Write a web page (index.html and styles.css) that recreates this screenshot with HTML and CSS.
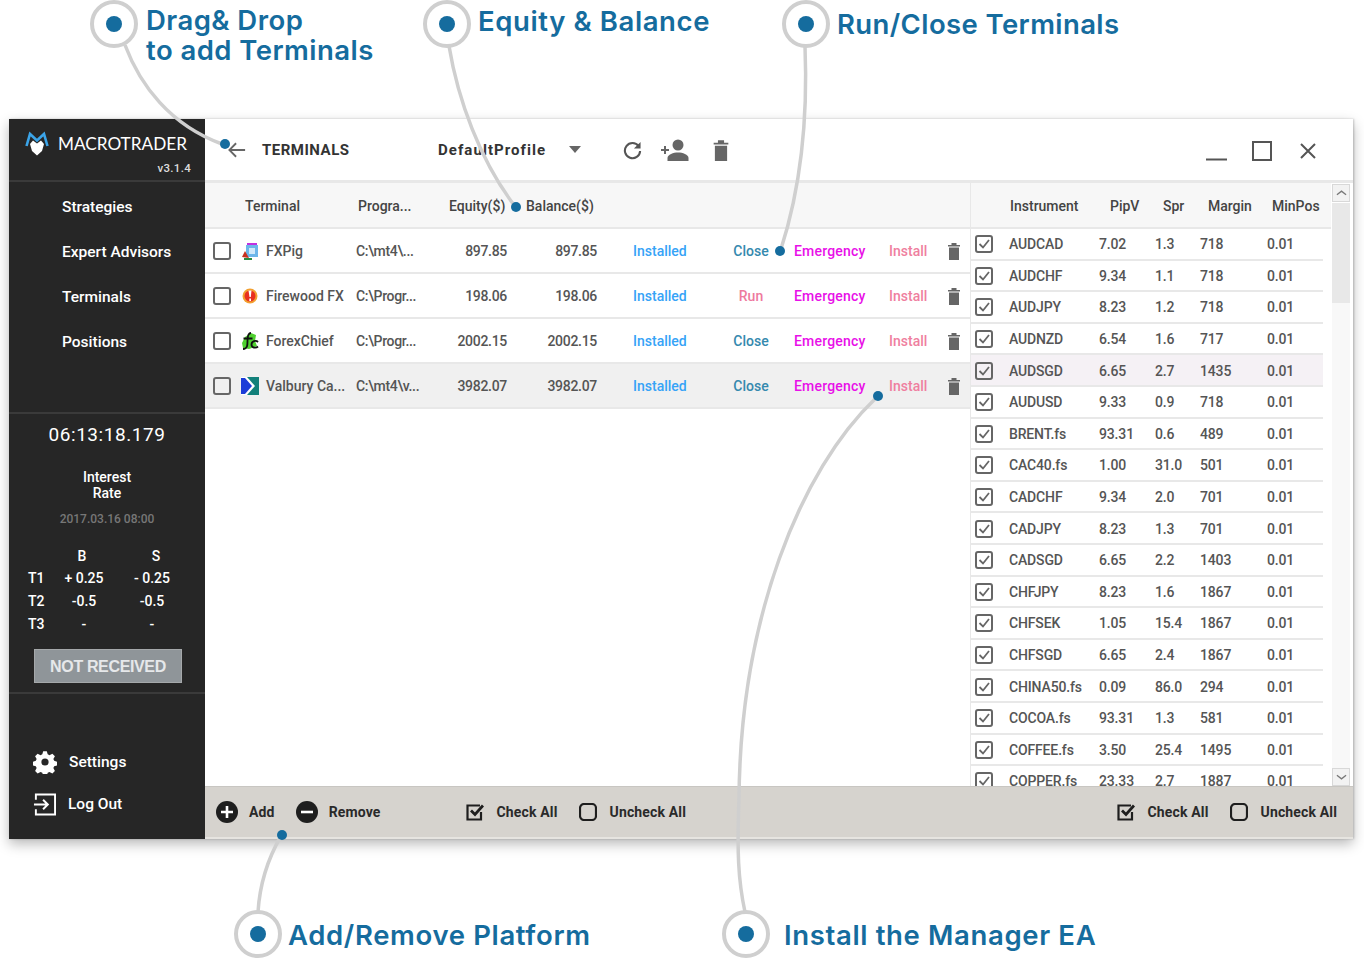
FILE: index.html
```html
<!DOCTYPE html>
<html lang="en">
<head>
<meta charset="utf-8">
<title>Macrotrader Terminals</title>
<link rel="stylesheet" href="styles.css">
</head>
<body>
<svg class="defs" aria-hidden="true">
  <symbol id="box" viewBox="0 0 18 18"><rect x="1" y="1" width="16" height="16" rx="2" fill="none" stroke="#666" stroke-width="2"/></symbol>
  <symbol id="boxc" viewBox="0 0 18 18"><rect x="1" y="1" width="16" height="16" rx="2" fill="none" stroke="#666" stroke-width="2"/><path d="M4.500 9l3.500 3.500L14 5" fill="none" stroke="#666" stroke-width="1.800"/></symbol>
  <symbol id="fbox" viewBox="0 0 18 18"><rect x="1" y="1" width="16" height="16" rx="4" fill="none" stroke="#1e1e1e" stroke-width="2.200"/></symbol>
  <symbol id="fboxc" viewBox="0 0 18 18"><path d="M15 9v7.500H1.500v-14H14" fill="none" stroke="#1e1e1e" stroke-width="2.200"/><path d="M5 7.500l4 4 8-9" fill="none" stroke="#1e1e1e" stroke-width="2.800"/></symbol>
  <symbol id="trash" viewBox="0 0 12 18"><path d="M0 3h12v1.500H0zM3.500 1h5v2h-5zM1 5.500h10V18H1z" fill="#666"/></symbol>
</svg>
<div class="stage">
  <div class="window">
    <aside class="sidebar">
      <div class="brand">
        <div class="brand-line">
          <svg class="logo" viewBox="0 0 24 25"><path d="M1.500 15L5 3l7 6.500L19 3l3.500 12" fill="none" stroke="#3ba4e8" stroke-width="2.600"/><path d="M5 13l3-3.500 4 3 4-3 3 3.500-2 7-5 4.500L7 20z" fill="#fff"/></svg>
          <span class="brand-name">MACROTRADER</span>
        </div>
        <div class="version">v3.1.4</div>
      </div>
      <nav class="nav">
        <a class="nav-item">Strategies</a>
        <a class="nav-item">Expert Advisors</a>
        <a class="nav-item">Terminals</a>
        <a class="nav-item">Positions</a>
      </nav>
      <section class="info">
        <div class="clock">06:13:18.179</div>
        <div class="rate-title">Interest<br>Rate</div>
        <div class="rate-date">2017.03.16 08:00</div>
        <div class="rates">
          <span></span><span class="c hb">B</span><span class="c hs">S</span>
          <span>T1</span><span class="c">+ 0.25</span><span class="c">- 0.25</span>
          <span>T2</span><span class="c">-0.5</span><span class="c">-0.5</span>
          <span>T3</span><span class="c">-</span><span class="c">-</span>
        </div>
        <div class="status">NOT RECEIVED</div>
      </section>
      <div class="side-foot">
        <a class="side-link">
          <svg class="gear" viewBox="0 0 24 24"><path fill="#fff" fill-rule="evenodd" d="M10 0h4l1 3.500 2 .9 3.200-1.700 2.800 2.800-1.700 3.200.9 2 3.500 1v4l-3.500 1-.9 2 1.700 3.200-2.800 2.800-3.200-1.700-2 .9-1 3.500h-4l-1-3.500-2-.9-3.200 1.700-2.800-2.800 1.700-3.200-.9-2-3.500-1v-4l3.500-1 .9-2-1.700-3.200 2.800-2.800 3.200 1.700 2-.9zM12 8a4 4 0 100 8 4 4 0 000-8z" transform="translate(1.200 1.200) scale(.9)"/></svg>
          <span>Settings</span>
        </a>
        <a class="side-link logout">
          <svg class="exit" viewBox="0 0 24 24"><path d="M3 7V1.500h20v21H3V17M1 12h14M10.500 7l5 5-5 5" fill="none" stroke="#fff" stroke-width="2"/></svg>
          <span>Log Out</span>
        </a>
      </div>
    </aside>
    <main class="main">
      <header class="toolbar">
        <svg class="back" viewBox="0 0 20 18"><path d="M19 9H2M9 1.500L1.500 9 9 16.500" fill="none" stroke="#666" stroke-width="2"/></svg>
        <h1 class="title">TERMINALS</h1>
        <span class="profile">DefaultProfile</span>
        <span class="caret"></span>
        <svg class="refresh" viewBox="0 0 20 20"><path d="M16.500 6A8 8 0 1018 11" fill="none" stroke="#555" stroke-width="2.200"/><path d="M18.500 1.500v7h-7z" fill="#555"/></svg>
        <svg class="adduser" viewBox="0 0 28 22"><path d="M0 10h8v2H0zM3 7h2v8H3z" fill="#666"/><circle cx="17" cy="6" r="5.500" fill="#666"/><path d="M6.500 22v-3c0-3.500 6-5.500 10.500-5.500S27.500 15.500 27.500 19v3z" fill="#666"/></svg>
        <svg class="bigtrash"><use href="#trash"/></svg>
        <div class="winctl">
          <svg class="win-min" viewBox="0 0 21 3"><path d="M0 1.500h21" stroke="#555" stroke-width="2"/></svg>
          <svg class="win-max" viewBox="0 0 20 20"><rect x="1" y="1" width="18" height="18" fill="none" stroke="#555" stroke-width="2"/></svg>
          <svg class="win-close" viewBox="0 0 16 16"><path d="M1 1l14 14M15 1L1 15" stroke="#555" stroke-width="2"/></svg>
        </div>
      </header>
      <div class="content">
        <section class="terminals">
          <div class="t-head">
            <span class="h-term">Terminal</span><span class="h-prog">Progra...</span><span class="h-eq">Equity($)</span><span class="h-bal">Balance($)</span>
          </div>
          <div class="t-row">
            <svg class="chk"><use href="#box"/></svg>
            <svg class="ticon" viewBox="0 0 18 18"><rect x="5" y="3" width="12" height="12" fill="#6cb6ea"/><rect x="8" y="6" width="6" height="6" fill="#cfe8fa"/><path d="M6 2h10" stroke="#c030e0" stroke-width="2"/><path d="M1 15l3-6 4 7z" fill="#c83020"/><path d="M3 17h8" stroke="#2a8a40" stroke-width="2"/></svg>
            <span class="name">FXPig</span><span class="path">C:\mt4\...</span><span class="num">897.85</span><span class="num">897.85</span>
            <span class="installed">Installed</span><span class="close">Close</span><span class="emergency">Emergency</span><span class="install">Install</span>
            <svg class="rowtrash"><use href="#trash"/></svg>
          </div>
          <div class="t-row">
            <svg class="chk"><use href="#box"/></svg>
            <svg class="ticon" viewBox="0 0 18 18"><circle cx="9" cy="9" r="7.500" fill="#f2a030"/><circle cx="9" cy="9" r="5.500" fill="#e83020"/><path d="M7.500 3.500h3l-.7 6.500H8.500zM8.300 11.500h1.700V14H8.300z" fill="#fff"/></svg>
            <span class="name">Firewood FX</span><span class="path">C:\Progr...</span><span class="num">198.06</span><span class="num">198.06</span>
            <span class="installed">Installed</span><span class="run">Run</span><span class="emergency">Emergency</span><span class="install">Install</span>
            <svg class="rowtrash"><use href="#trash"/></svg>
          </div>
          <div class="t-row">
            <svg class="chk"><use href="#box"/></svg>
            <svg class="ticon" viewBox="0 0 18 18"><path d="M1 11l3-6 6-4 5 2-1 6 2 5-8 3-6-1z" fill="#4fd030"/><path d="M10 1C7 1 6.500 5 6.500 9s0 8-4.500 8M2.500 6.500h9" fill="none" stroke="#111" stroke-width="1.800"/><path d="M17 10c-2-2-6.500-1-6.500 2.500s4.500 4 6.500 2" fill="none" stroke="#111" stroke-width="1.800"/></svg>
            <span class="name">ForexChief</span><span class="path">C:\Progr...</span><span class="num">2002.15</span><span class="num">2002.15</span>
            <span class="installed">Installed</span><span class="close">Close</span><span class="emergency">Emergency</span><span class="install">Install</span>
            <svg class="rowtrash"><use href="#trash"/></svg>
          </div>
          <div class="t-row t-row-sel">
            <svg class="chk"><use href="#box"/></svg>
            <svg class="ticon" viewBox="0 0 18 18"><rect width="18" height="18" fill="#12807a"/><path d="M0 0h6l8 9-8 9H0z" fill="#fff"/><path d="M0 1h4l7 8-7 8H0z" fill="#1c3cd8"/></svg>
            <span class="name">Valbury Ca...</span><span class="path">C:\mt4\v...</span><span class="num">3982.07</span><span class="num">3982.07</span>
            <span class="installed">Installed</span><span class="close">Close</span><span class="emergency">Emergency</span><span class="install">Install</span>
            <svg class="rowtrash"><use href="#trash"/></svg>
          </div>
        </section>
        <section class="instruments">
          <div class="i-table">
            <div class="i-head"><span></span><span>Instrument</span><span>PipV</span><span>Spr</span><span>Margin</span><span>MinPos</span></div>
            <div class="i-row"><svg class="chk"><use href="#boxc"/></svg><span>AUDCAD</span><span>7.02</span><span>1.3</span><span>718</span><span>0.01</span></div>
            <div class="i-row"><svg class="chk"><use href="#boxc"/></svg><span>AUDCHF</span><span>9.34</span><span>1.1</span><span>718</span><span>0.01</span></div>
            <div class="i-row"><svg class="chk"><use href="#boxc"/></svg><span>AUDJPY</span><span>8.23</span><span>1.2</span><span>718</span><span>0.01</span></div>
            <div class="i-row"><svg class="chk"><use href="#boxc"/></svg><span>AUDNZD</span><span>6.54</span><span>1.6</span><span>717</span><span>0.01</span></div>
            <div class="i-row i-row-sel"><svg class="chk"><use href="#boxc"/></svg><span>AUDSGD</span><span>6.65</span><span>2.7</span><span>1435</span><span>0.01</span></div>
            <div class="i-row"><svg class="chk"><use href="#boxc"/></svg><span>AUDUSD</span><span>9.33</span><span>0.9</span><span>718</span><span>0.01</span></div>
            <div class="i-row"><svg class="chk"><use href="#boxc"/></svg><span>BRENT.fs</span><span>93.31</span><span>0.6</span><span>489</span><span>0.01</span></div>
            <div class="i-row"><svg class="chk"><use href="#boxc"/></svg><span>CAC40.fs</span><span>1.00</span><span>31.0</span><span>501</span><span>0.01</span></div>
            <div class="i-row"><svg class="chk"><use href="#boxc"/></svg><span>CADCHF</span><span>9.34</span><span>2.0</span><span>701</span><span>0.01</span></div>
            <div class="i-row"><svg class="chk"><use href="#boxc"/></svg><span>CADJPY</span><span>8.23</span><span>1.3</span><span>701</span><span>0.01</span></div>
            <div class="i-row"><svg class="chk"><use href="#boxc"/></svg><span>CADSGD</span><span>6.65</span><span>2.2</span><span>1403</span><span>0.01</span></div>
            <div class="i-row"><svg class="chk"><use href="#boxc"/></svg><span>CHFJPY</span><span>8.23</span><span>1.6</span><span>1867</span><span>0.01</span></div>
            <div class="i-row"><svg class="chk"><use href="#boxc"/></svg><span>CHFSEK</span><span>1.05</span><span>15.4</span><span>1867</span><span>0.01</span></div>
            <div class="i-row"><svg class="chk"><use href="#boxc"/></svg><span>CHFSGD</span><span>6.65</span><span>2.4</span><span>1867</span><span>0.01</span></div>
            <div class="i-row"><svg class="chk"><use href="#boxc"/></svg><span>CHINA50.fs</span><span>0.09</span><span>86.0</span><span>294</span><span>0.01</span></div>
            <div class="i-row"><svg class="chk"><use href="#boxc"/></svg><span>COCOA.fs</span><span>93.31</span><span>1.3</span><span>581</span><span>0.01</span></div>
            <div class="i-row"><svg class="chk"><use href="#boxc"/></svg><span>COFFEE.fs</span><span>3.50</span><span>25.4</span><span>1495</span><span>0.01</span></div>
            <div class="i-row"><svg class="chk"><use href="#boxc"/></svg><span>COPPER.fs</span><span>23.33</span><span>2.7</span><span>1887</span><span>0.01</span></div>
          </div>
          <div class="scrollbar">
            <div class="sb-btn"><svg viewBox="0 0 12 8"><path d="M1 6l5-4 5 4" fill="none" stroke="#777" stroke-width="1.400"/></svg></div>
            <div class="sb-thumb"></div>
            <div class="sb-track"></div>
            <div class="sb-btn"><svg viewBox="0 0 12 8"><path d="M1 2l5 4 5-4" fill="none" stroke="#777" stroke-width="1.400"/></svg></div>
          </div>
        </section>
      </div>
      <footer class="footer">
        <svg class="f-round" viewBox="0 0 22 22"><circle cx="11" cy="11" r="11" fill="#1e1e1e"/><path d="M5 11h12M11 5v12" stroke="#fff" stroke-width="2.600"/></svg>
        <span class="f-label f-add">Add</span>
        <svg class="f-round" viewBox="0 0 22 22"><circle cx="11" cy="11" r="11" fill="#1e1e1e"/><path d="M5 11h12" stroke="#fff" stroke-width="2.600"/></svg>
        <span class="f-label f-remove">Remove</span>
        <svg class="f-box"><use href="#fboxc"/></svg>
        <span class="f-label f-check">Check All</span>
        <svg class="f-box"><use href="#fbox"/></svg>
        <span class="f-label">Uncheck All</span>
        <span class="f-space"></span>
        <svg class="f-box"><use href="#fboxc"/></svg>
        <span class="f-label f-check">Check All</span>
        <svg class="f-box"><use href="#fbox"/></svg>
        <span class="f-label">Uncheck All</span>
      </footer>
    </main>
  </div>

  <svg class="callouts" viewBox="0 0 1364 958">
    <g fill="none" stroke="#cfcfcf" stroke-width="3.500">
      <path d="M125 45C140 85 170 125 222 144"/>
      <path d="M449 46C458 100 480 160 514 205"/>
      <path d="M805 46C808 120 800 190 781 249"/>
      <path d="M258 912C260 880 270 855 281 836"/>
      <path d="M876 398C800 470 740 620 739 800C737 850 738 880 745 912"/>
    </g>
    <g fill="#fff" stroke="#cfcfcf" stroke-width="4">
      <circle cx="114" cy="24" r="22"/>
      <circle cx="447" cy="24" r="22"/>
      <circle cx="806" cy="24" r="22"/>
      <circle cx="258" cy="934" r="22"/>
      <circle cx="746" cy="934" r="22"/>
    </g>
    <g fill="#156c9e">
      <circle cx="114" cy="24" r="8"/>
      <circle cx="447" cy="24" r="8"/>
      <circle cx="806" cy="24" r="8"/>
      <circle cx="258" cy="934" r="8"/>
      <circle cx="746" cy="934" r="8"/>
      <circle cx="225" cy="144" r="5"/>
      <circle cx="516" cy="207" r="5"/>
      <circle cx="780" cy="251" r="5"/>
      <circle cx="878" cy="396" r="5"/>
      <circle cx="282" cy="835" r="5"/>
    </g>
  </svg>
  <div class="callout c-drag">Drag&amp; Drop<br>to add Terminals</div>
  <div class="callout c-equity">Equity &amp; Balance</div>
  <div class="callout c-run">Run/Close Terminals</div>
  <div class="callout c-add">Add/Remove Platform</div>
  <div class="callout c-install">Install the Manager EA</div>
</div>
</body>
</html>
```
FILE: styles.css
```css
* { box-sizing: border-box; }
html, body { margin: 0; padding: 0; background: #fff; }
body { font-family: Roboto, "Liberation Sans", sans-serif; font-size: 14px; color: #555; }
.defs { display: none; }
.stage { position: relative; width: 1364px; height: 958px; overflow: hidden; padding: 119px 0 0 9px; }

.window { display: flex; width: 1344px; height: 720px; background: #fff; box-shadow: 0 5px 12px rgba(0,0,0,.28), 1px 0 2px rgba(0,0,0,.2); }

/* sidebar */
.sidebar { width: 196px; flex: none; background: #262626; color: #fff; display: flex; flex-direction: column; font-weight: 500; }
.brand { height: 63px; border-bottom: 2px solid #3a3a3a; padding: 12px 14px 0 16px; }
.brand-line { display: flex; align-items: center; gap: 8px; }
.logo { width: 24px; height: 25px; flex: none; }
.brand-name { font-family: Lato, sans-serif; font-size: 17.200px; font-weight: 400; white-space: nowrap; margin-left: 1px; }
.version { text-align: right; font-size: 11.500px; letter-spacing: .3px; line-height: 13px; margin-top: 6px; color: #ddd; }
.nav { display: flex; flex-direction: column; padding-top: 3px; height: 232px; border-bottom: 2px solid #3a3a3a; }
.nav-item { height: 45px; line-height: 45px; font-size: 15.500px; padding-left: 53px; }
.info { height: 280px; border-bottom: 2px solid #3a3a3a; text-align: center; padding: 9px 0 0; }
.clock { font-size: 19px; font-weight: 400; line-height: 24px; letter-spacing: .55px; }
.rate-title { font-size: 14px; line-height: 16px; margin-top: 22px; }
.rate-date { font-size: 12px; color: #777; line-height: 14px; margin-top: 11px; }
.rates { display: grid; grid-template-columns: 20px 72px 64px; grid-template-rows: 22px; grid-auto-rows: 23px; line-height: 23px; padding-left: 19px; margin-top: 19px; text-align: left; }
.rates .c { text-align: center; }
.rates .hb { padding-right: 4px; }
.rates .hs { padding-left: 8px; }
.status { width: 148px; height: 34px; line-height: 33px; margin: 13px 0 0 25px; background: #8f9599; color: #e6e8ea; font-size: 16px; font-weight: 700; font-family: "Liberation Sans", sans-serif; letter-spacing: -.35px; border: 1px solid #a5a8aa; }
.side-foot { padding: 56px 0 0 24px; display: flex; flex-direction: column; gap: 18px; font-size: 15.500px; }
.side-link { display: flex; align-items: center; gap: 12px; height: 24px; }
.gear { width: 24px; height: 24px; }
.exit { width: 23px; height: 23px; }
.logout { gap: 12px; }

/* main */
.main { flex: 1; min-width: 0; display: flex; flex-direction: column; }
.toolbar { height: 64px; flex: none; display: flex; align-items: center; border-bottom: 3px solid #e8e8e8; padding-left: 23px; }
.back { width: 18px; height: 18px; flex: none; margin-top: 1px; }
.title { margin: 1px 0 0 16px; width: 176px; font-size: 15px; font-weight: 700; color: #333; letter-spacing: .5px; }
.profile { font-size: 15px; font-weight: 700; color: #333; letter-spacing: 1.05px; width: 131px; }
.caret { width: 0; height: 0; border: 6px solid transparent; border-top: 7px solid #666; border-bottom: 0; margin-right: 42px; flex: none; }
.refresh { width: 19px; height: 20px; margin-right: 19px; flex: none; }
.adduser { width: 28px; height: 22px; margin-right: 24px; flex: none; }
.bigtrash { width: 16px; height: 22px; flex: none; }
.winctl { margin-left: auto; display: flex; align-items: center; padding: 2px 37px 0 0; }
.win-min { width: 21px; height: 3px; margin-top: 18px; margin-right: 25px; }
.win-max { width: 20px; height: 20px; margin-right: 28px; }
.win-close { width: 16px; height: 16px; }

.content { flex: 1; min-height: 0; display: flex; overflow: hidden; }
.terminals { width: 765px; flex: none; }
.t-head { height: 46px; padding-top: 1px; display: flex; align-items: center; background: #f7f7f7; border-bottom: 2px solid #e8e8e8; font-weight: 500; color: #444; }
.h-term { margin-left: 40px; width: 113px; }
.h-prog { width: 91px; }
.h-eq { width: 77px; }
.t-row { height: 45px; display: grid; grid-template-columns: 36px 25px 90px 75px 76px 90px 126px 56px 110px 59px 12px; align-items: center; border-bottom: 2px solid #e8e8e8; font-weight: 500; }
.t-row-sel { background: #f0f0f0; }
.chk { width: 18px; height: 18px; display: block; }
.t-row .chk { margin-left: 8px; }
.ticon { width: 18px; height: 18px; display: block; }
.path { white-space: nowrap; letter-spacing: -.35px; }
.num { text-align: right; letter-spacing: -.3px; }
.installed { color: #36a3f7; padding-left: 36px; }
.close { color: #3589ae; text-align: center; }
.run { color: #ee7a9e; text-align: center; }
.emergency { color: #e810e8; padding-left: 15px; letter-spacing: .2px; }
.install { color: #ef7fa0; }
.rowtrash { width: 12px; height: 18px; display: block; }

.instruments { flex: 1; min-width: 0; display: flex; border-left: 1px solid #e8e8e8; }
.i-table { width: 360px; flex: none; overflow: hidden; }
.i-head { height: 46px; padding-top: 1px; display: grid; grid-template-columns: 39px 100px 53px 45px 64px 59px; align-items: center; background: #f7f7f7; border-bottom: 2px solid #e8e8e8; font-weight: 500; color: #444; white-space: nowrap; }
.i-row { height: 31.600px; width: 352px; padding-top: 1px; display: grid; grid-template-columns: 38px 90px 56px 45px 67px 40px; align-items: center; border-bottom: 2px solid #e8e8e8; font-weight: 500; white-space: nowrap; letter-spacing: -.15px; }
.i-row .chk { margin-left: 4px; }
.i-row-sel { background: #f5f1f5; }
.scrollbar { width: 22px; flex: none; display: flex; flex-direction: column; padding: 1px 3px 0 1px; background: #fff; }
.sb-btn { height: 18px; flex: none; border: 1px solid #d8d8d8; background: #f2f2f2; display: flex; align-items: center; justify-content: center; }
.sb-btn svg { width: 11px; height: 8px; }
.sb-thumb { height: 100px; flex: none; background: #e8e8e8; margin-top: 1px; }
.sb-track { flex: 1; background: #f8f8f8; }

.footer { height: 53px; padding: 0 16px 1px 11px; flex: none; display: flex; align-items: center; background: #d6d3ce; border-top: 1px solid #c8c6c2; border-bottom: 2px solid #e6e4e0; color: #2a2a2a; font-weight: 700; letter-spacing: .15px; }
.f-round { width: 22px; height: 22px; flex: none; }
.f-label { margin-left: 11px; white-space: nowrap; }
.f-add { margin-right: 21px; }
.f-remove { margin-right: 85px; }
.f-box { width: 18px; height: 18px; flex: none; }
.f-box + .f-label { margin-left: 13px; }
.f-box + .f-check { margin-left: 13px; margin-right: 21px; }
.f-space { flex: 1; }

/* callouts */
.callouts { position: absolute; left: 0; top: 0; width: 1364px; height: 958px; pointer-events: none; }
.callout { position: absolute; font-family: Inter, sans-serif; font-weight: 600; font-size: 27.500px; line-height: 30px; color: #156c9e; white-space: nowrap; letter-spacing: .45px; }
.c-drag { left: 146px; top: 5px; }
.c-equity { left: 478px; top: 6px; letter-spacing: .6px; }
.c-run { left: 837px; top: 9px; letter-spacing: .4px; }
.c-add { left: 288px; top: 920px; letter-spacing: .65px; }
.c-install { left: 784px; top: 920px; letter-spacing: .65px; }
```
